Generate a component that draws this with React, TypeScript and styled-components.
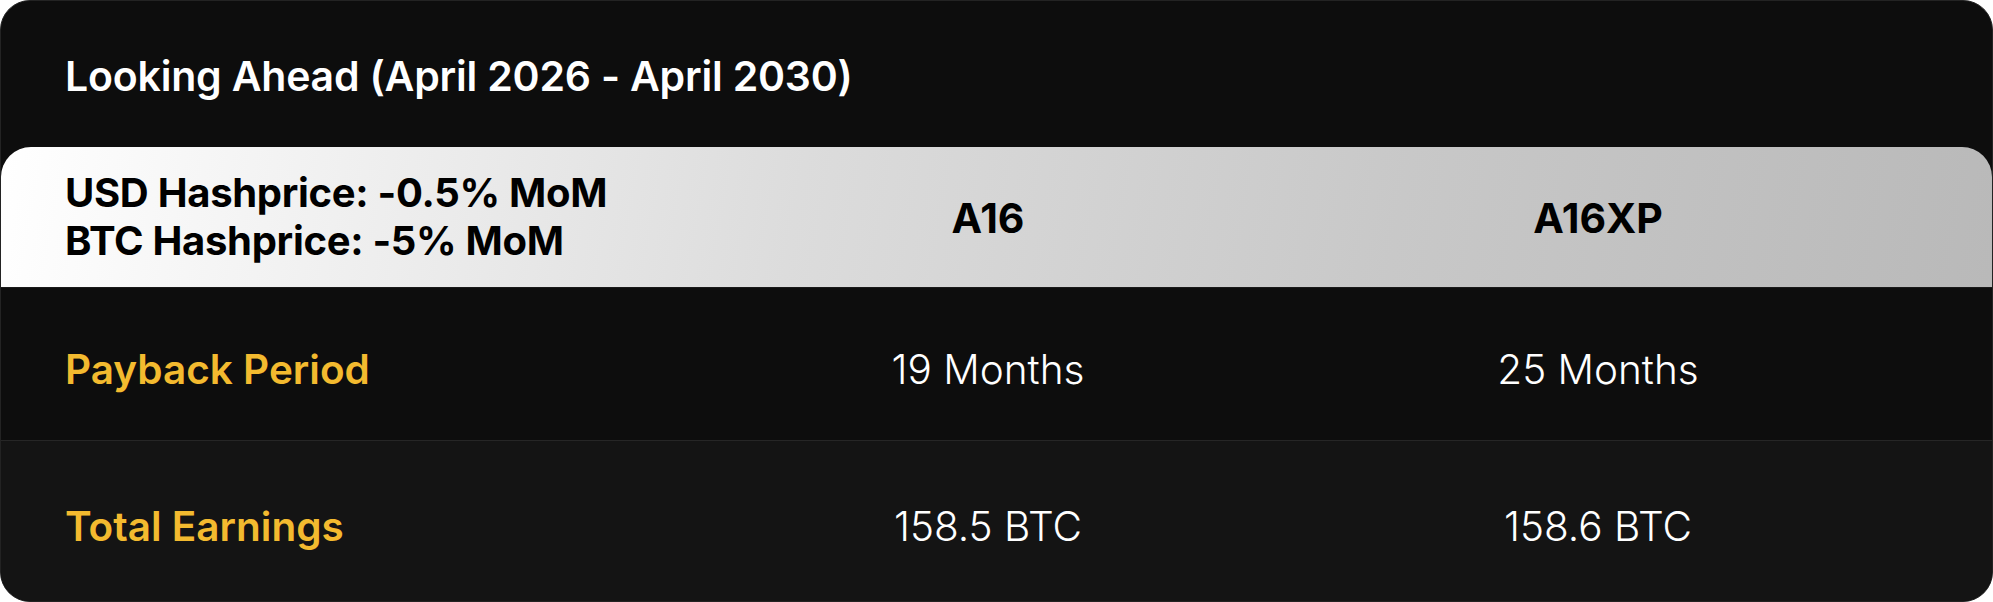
import styled, { createGlobalStyle } from "styled-components";

const Global = createGlobalStyle`
  html, body {
    margin: 0;
    padding: 0;
    background: #ffffff;
  }
  body {
    font-family: Inter, "Noto Sans", "Liberation Sans", sans-serif;
  }
`;

const Card = styled.div`
  width: 1993px;
  height: 602px;
  box-sizing: border-box;
  background: #0d0d0d;
  border: 1px solid #232323;
  border-radius: 30px;
  overflow: hidden;
  display: flex;
  flex-direction: column;
`;

const Title = styled.h2`
  margin: 0;
  height: 146px;
  display: flex;
  align-items: center;
  padding: 4px 0 0 64px;
  box-sizing: border-box;
  color: #ffffff;
  font-size: 41px;
  font-weight: 600;
  letter-spacing: -0.2px;
`;

const Row = styled.div<{ $height: number; $bg: string }>`
  display: grid;
  grid-template-columns: 618fr 610fr 610fr;
  align-items: center;
  height: ${(p) => p.$height}px;
  padding: 0 89px 0 64px;
  background: ${(p) => p.$bg};
  box-sizing: border-box;
`;

const HeaderRow = styled(Row)`
  border-radius: 30px 30px 0 0;
  background: linear-gradient(100deg, #ffffff 0%, #dcdcdc 40%, #c8c8c8 70%, #b9b9b9 100%);
  border-bottom: 1px solid #1a1a1a;
`;

const BodyRow = styled(Row)`
  padding-top: 10px;
  border-top: 1px solid #262626;
  &:first-of-type {
    border-top: none;
  }
`;

const Assumptions = styled.div`
  color: #000000;
  font-size: 40px;
  font-weight: 700;
  line-height: 48px;
  letter-spacing: -0.3px;
`;

const ModelName = styled.div`
  color: #000000;
  font-size: 41px;
  font-weight: 700;
  text-align: center;
  padding-top: 2px;
`;

const Label = styled.div`
  color: #f3ba2f;
  font-size: 40.5px;
  font-weight: 600;
`;

const Value = styled.div`
  color: #ffffff;
  font-size: 40.5px;
  font-weight: 300;
  text-align: center;
`;

const Body = styled.div`
  display: flex;
  flex-direction: column;
`;

const rows = [
  { label: "Payback Period", a16: "19 Months", a16xp: "25 Months", bg: "#0d0d0d", height: 152 },
  { label: "Total Earnings", a16: "158.5 BTC", a16xp: "158.6 BTC", bg: "#141414", height: 161 },
];

export default function App() {
  return (
    <>
      <Global />
      <Card>
        <Title>Looking Ahead (April 2026 - April 2030)</Title>
        <HeaderRow $height={142} $bg="transparent">
          <Assumptions>
            USD Hashprice: -0.5% MoM
            <br />
            BTC Hashprice: -5% MoM
          </Assumptions>
          <ModelName>A16</ModelName>
          <ModelName>A16XP</ModelName>
        </HeaderRow>
        <Body>
          {rows.map((r) => (
            <BodyRow key={r.label} $height={r.height} $bg={r.bg}>
              <Label>{r.label}</Label>
              <Value>{r.a16}</Value>
              <Value>{r.a16xp}</Value>
            </BodyRow>
          ))}
        </Body>
      </Card>
    </>
  );
}
